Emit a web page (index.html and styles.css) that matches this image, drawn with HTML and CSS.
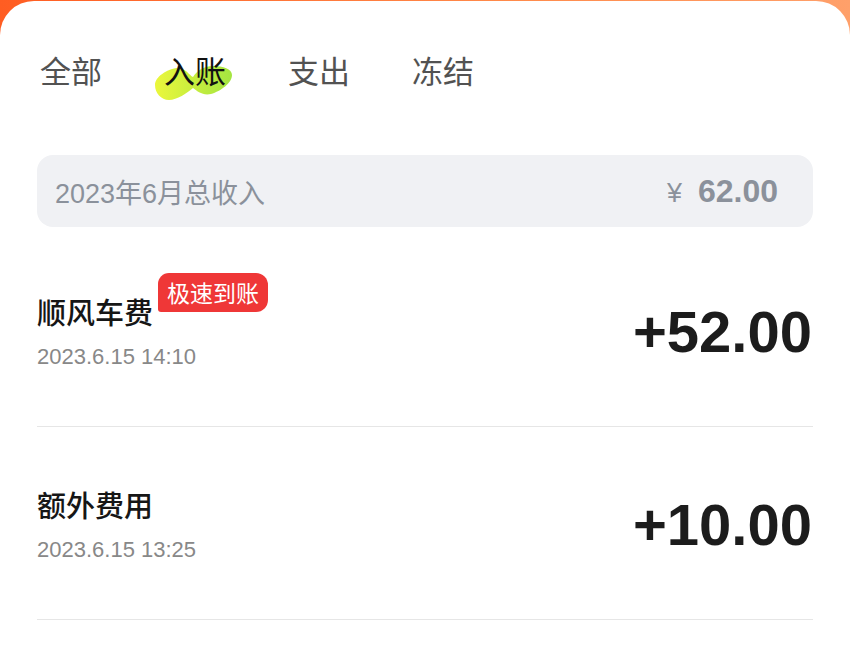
FILE: index.html
```html
<!DOCTYPE html>
<html lang="zh-CN">
<head>
<meta charset="utf-8">
<title>账单</title>
<link rel="stylesheet" href="styles.css">
</head>
<body>
<div class="page">
  <div class="card">
    <nav class="tabs">
      <span class="tab">全部</span>
      <span class="tab active">
        <svg class="blob" width="82" height="40" viewBox="0 0 82 40" aria-hidden="true">
          <defs>
            <linearGradient id="bg" x1="0" y1="0" x2="1" y2="0">
              <stop offset="0" stop-color="#ebf73c"/>
              <stop offset="1" stop-color="#a4e541"/>
            </linearGradient>
          </defs>
          <path fill="url(#bg)" d="M2,22 C2,14 14,6 24,5 C32,4 36,12 40,14 C44,8 50,3 60,3 C70,3 79,6 79,12 C79,20 68,28 58,31 C50,33 44,28 40,25 C34,30 24,37 16,37 C8,37 2,30 2,22 Z"/>
        </svg>
        <span class="tab-label">入账</span>
      </span>
      <span class="tab">支出</span>
      <span class="tab">冻结</span>
    </nav>

    <div class="summary">
      <span class="summary-label">2023年6月总收入</span>
      <span class="summary-value"><span class="yen">¥</span><b>62.00</b></span>
    </div>

    <ul class="list">
      <li class="row">
        <div class="info">
          <div class="title-line">
            <span class="title">顺风车费</span>
            <span class="badge">极速到账</span>
          </div>
          <div class="date">2023.6.15 14:10</div>
        </div>
        <div class="amount">+52.00</div>
      </li>
      <li class="row">
        <div class="info">
          <div class="title-line">
            <span class="title">额外费用</span>
          </div>
          <div class="date">2023.6.15 13:25</div>
        </div>
        <div class="amount">+10.00</div>
      </li>
    </ul>
  </div>
</div>
</body>
</html>
```

FILE: styles.css
```css
* { box-sizing: border-box; }

html, body {
  margin: 0;
  padding: 0;
}

body {
  font-family: "Liberation Sans", "Noto Sans CJK SC", sans-serif;
  background: linear-gradient(90deg, #ff5d22 0%, #ff8a4a 60%, #ffa06a 100%);
  height: 657px;
  overflow: hidden;
}

.page {
  padding-top: 1px;
}

.card {
  background: #ffffff;
  border-radius: 34px 34px 0 0;
  min-height: 656px;
  padding-top: 54px;
}

.tabs {
  display: flex;
  gap: 62px;
  padding-left: 40px;
  height: 30px;
}

.tab {
  position: relative;
  font-family: "Noto Sans CJK SC", sans-serif;
  font-size: 31px;
  line-height: 30px;
  color: #525252;
  width: 62px;
}

.tab.active {
  color: #111111;
}

.tab-label {
  position: relative;
}

.blob {
  position: absolute;
  left: -11px;
  top: 8px;
}

.summary {
  margin: 70px 37px 7px;
  height: 72px;
  background: #f0f1f4;
  border-radius: 16px;
  display: flex;
  align-items: center;
  justify-content: space-between;
  padding: 0 35px 0 18px;
  color: #8b919b;
}

.summary-label {
  font-size: 27px;
  font-family: "Liberation Sans", "Noto Sans CJK SC", sans-serif;
}

.summary-value {
  display: flex;
  align-items: baseline;
}

.summary-value .yen {
  font-size: 27px;
  margin-right: 16px;
}

.summary-value b {
  font-size: 32px;
  font-weight: 700;
}

.list {
  list-style: none;
  margin: 0 37px;
  padding: 0;
}

.row {
  display: flex;
  align-items: center;
  justify-content: space-between;
  padding: 59px 1px 55px 0;
  border-bottom: 1px solid #e6e6e6;
}

.info {
  display: flex;
  flex-direction: column;
  gap: 14px;
}

.title-line {
  display: flex;
  align-items: flex-start;
  height: 36px;
}

.title {
  font-family: "Noto Sans CJK SC", sans-serif;
  font-size: 29px;
  font-weight: 500;
  line-height: 36px;
  color: #161616;
}

.badge {
  margin: -20px 0 0 5px;
  height: 39px;
  padding: 0 9px;
  background: #ef3737;
  color: #ffffff;
  font-family: "Noto Sans CJK SC", sans-serif;
  font-size: 23px;
  line-height: 39px;
  border-radius: 11px 12px 12px 3px;
}

.date {
  font-size: 22px;
  line-height: 28px;
  color: #888888;
}

.amount {
  font-size: 58px;
  font-weight: 700;
  line-height: 60px;
  color: #1c1c1c;
}
```
